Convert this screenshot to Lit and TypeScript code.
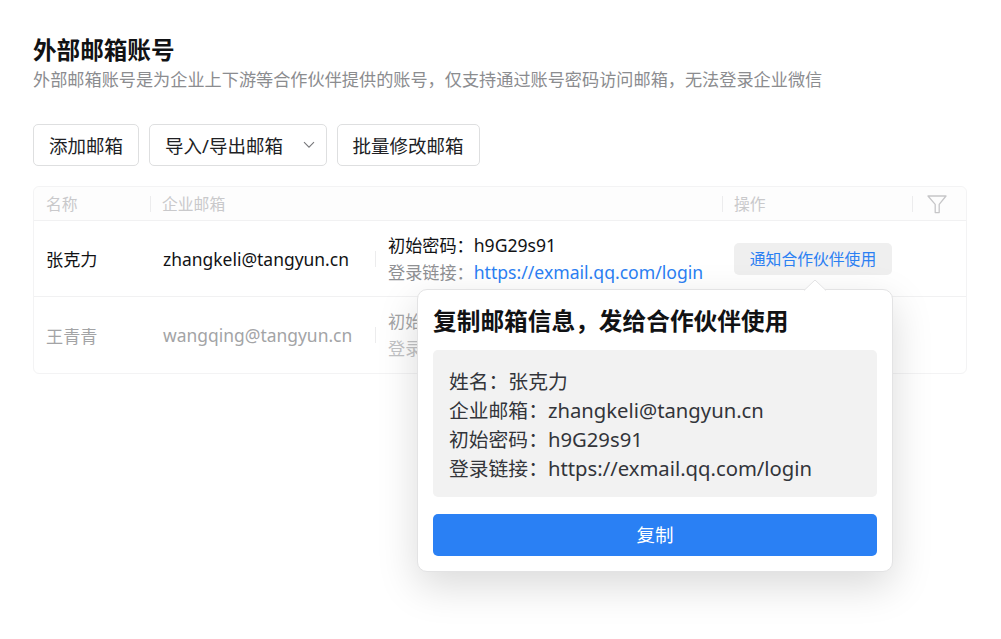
import { LitElement, html, css, svg } from "lit";
import { customElement } from "lit/decorators.js";

const rows = [
  { name: "张克力", email: "zhangkeli@tangyun.cn", pw: "h9G29s91", dim: false },
  { name: "王青青", email: "wangqing@tangyun.cn", pw: "h9G29s91", dim: true },
];

@customElement("app-root")
export class AppRoot extends LitElement {
  static styles = css`
    :host {
      display: block;
      width: 1001px;
      height: 639px;
      position: relative;
      overflow: hidden;
      background: #fff;
      font-family: "Noto Sans", "Noto Sans CJK SC", sans-serif;
      color: #111214;
    }
    .page { padding: 35px 34px 0 33px; display: flex; flex-direction: column; }
    h1 { margin: 0; font-size: 23.6px; line-height: 30px; font-weight: 700; color: #111214; }
    .sub { margin-top: 2px; font-size: 17.17px; line-height: 26px; color: #8b8c8f; white-space: nowrap; }
    .toolbar { display: flex; gap: 10px; margin-top: 31px; }
    .btn {
      box-sizing: border-box; height: 42px; padding: 0 15px; display: flex; align-items: center;
      border: 1px solid #dedfe0; border-radius: 5px; font-size: 18.5px; color: #202124; background: #fff;
    }
    .btn.dd { width: 177.5px; justify-content: space-between; padding-right: 11px; }
    .btn svg { display: block; }
    .table { margin-top: 20px; border: 1px solid #f3f3f4; border-radius: 6px; }
    .row { display: grid; grid-template-columns: 116px 225px 347px 190px 1fr; align-items: center; }
    .head { height: 34px; background: #fdfdfd; border-bottom: 1px solid #f1f1f2; color: #c9c9cb; font-size: 15.8px; border-radius: 6px 6px 0 0; box-sizing: border-box; }
    .body { height: 76px; box-sizing: border-box; font-size: 17.15px; border-bottom: 1px solid #f1f1f2; }
    .body:last-child { height: 76px; border-bottom: 0; }
    .cell { padding-left: 12px; position: relative; white-space: nowrap; }
    .cell.sep::before {
      content: ""; position: absolute; left: 0; top: 50%; margin-top: -8px; height: 16px; width: 1px; background: #ececed;
    }
    .first { padding-left: 12px; }
    .mail { padding-left: 13px; }
    .lines { line-height: 27px; padding-left: 13px; }
    .en { font-size: 17.6px; }
    .mail .en { font-size: 17.45px; }
    .lbl { color: #8f9093; }
    .link { color: #2b80f3; }
    .dim { color: #a3a4a6; }
    .dim .lbl { color: #c2c3c5; }
    .cell.filter { padding-left: 15px; display: flex; }
    .filter svg { display: block; }
    .notify {
      display: inline-block; box-sizing: border-box; width: 158px; height: 32px; line-height: 33px; text-align: center;
      background: #efefef; border-radius: 5px; color: #2b80f3; font-size: 15.8px;
    }
    .pop {
      position: absolute; left: 417px; top: 289px; width: 476px; height: 283px; box-sizing: border-box;
      background: #fff; border: 1px solid #e3e3e4; border-radius: 10px; padding: 15px;
      box-shadow: 0 14px 40px rgba(0, 0, 0, 0.15);
      display: flex; flex-direction: column;
    }
    .arrow { position: absolute; left: 385px; top: -11px; display: block; }
    .pop h2 { margin: 0; font-size: 23.7px; line-height: 32px; font-weight: 700; color: #111214; white-space: nowrap; }
    .info {
      margin-top: 13px; height: 147px; box-sizing: border-box; padding: 17px 16px; background: #f2f2f2; border-radius: 5px;
      font-size: 19.8px; line-height: 29px; color: #33353a; white-space: nowrap;
    }
    .info .en { font-size: 20.25px; }
    .copy {
      margin-top: 17px; height: 42px; background: #2a80f4; border-radius: 5px; color: #fff; text-align: center;
      font-size: 18.5px; line-height: 42px;
    }
  `;

  render() {
    return html`
      <div class="page">
        <h1>外部邮箱账号</h1>
        <div class="sub">外部邮箱账号是为企业上下游等合作伙伴提供的账号，仅支持通过账号密码访问邮箱，无法登录企业微信</div>
        <div class="toolbar">
          <div class="btn">添加邮箱</div>
          <div class="btn dd">导入/导出邮箱
            <svg width="12" height="8" viewBox="0 0 12 8" fill="none" stroke="#77787b" stroke-width="1.1"><path d="M1 1.2 6 6.2 11 1.2"/></svg>
          </div>
          <div class="btn">批量修改邮箱</div>
        </div>
        <div class="table">
          <div class="row head">
            <div class="cell first">名称</div>
            <div class="cell sep">企业邮箱</div>
            <div class="cell"></div>
            <div class="cell sep">操作</div>
            <div class="cell sep filter">
              <svg width="20" height="20" viewBox="0 0 20 20" fill="none" stroke="#c6c6c8" stroke-width="1.3" stroke-linejoin="round">${svg`<path d="M1 2H19L12.2 10.4V18.6H8.2V10.4Z"/>`}</svg>
            </div>
          </div>
          ${rows.map(
            (r) => html`
              <div class="row body ${r.dim ? "dim" : ""}">
                <div class="cell first">${r.name}</div>
                <div class="cell mail"><span class="en">${r.email}</span></div>
                <div class="cell sep lines">
                  <div>初始密码：<span class="en">${r.pw}</span></div>
                  <div><span class="lbl">登录链接：</span><span class="en ${r.dim ? "" : "link"}">https://exmail.qq.com/login</span></div>
                </div>
                <div class="cell">${r.dim ? "" : html`<span class="notify">通知合作伙伴使用</span>`}</div>
                <div class="cell"></div>
              </div>
            `
          )}
        </div>
      </div>
      <div class="pop">
        <svg class="arrow" width="24" height="12" viewBox="0 0 24 12"><path d="M1 11.5 12 1 23 11.5" fill="#fff" stroke="#e3e3e4" stroke-width="1"/></svg>
        <h2>复制邮箱信息，发给合作伙伴使用</h2>
        <div class="info">
          <div>姓名：张克力</div>
          <div>企业邮箱：<span class="en">zhangkeli@tangyun.cn</span></div>
          <div>初始密码：<span class="en">h9G29s91</span></div>
          <div>登录链接：<span class="en">https://exmail.qq.com/login</span></div>
        </div>
        <div class="copy">复制</div>
      </div>
    `;
  }
}
